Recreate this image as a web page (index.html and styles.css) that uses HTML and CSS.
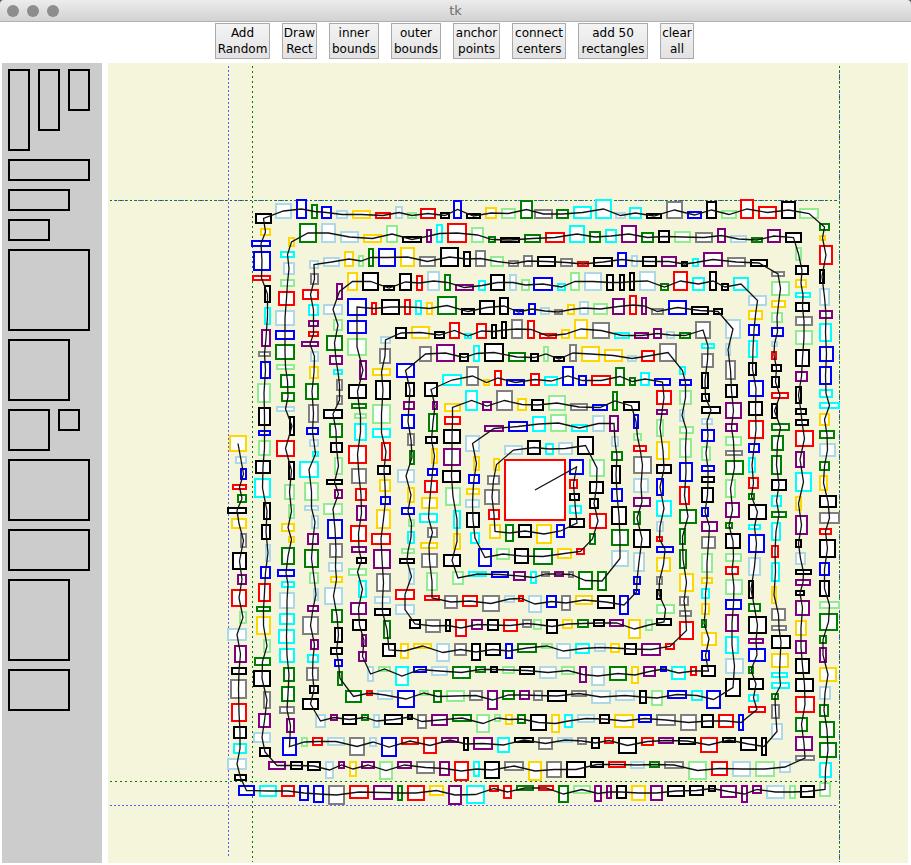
FILE: index.html
```html
<!DOCTYPE html>
<html lang="en">
<head>
    <meta charset="UTF-8">
    <title>tk</title>
    <link rel="stylesheet" href="styles.css">
</head>
<body>
    <div class="titlewrap">
        <div class="titlebar">
            <span class="light"></span>
            <span class="light"></span>
            <span class="light"></span>
            <span class="title">tk</span>
        </div>
    </div>
    <div class="toolbar">
        <button class="w55">Add<br>Random</button>
        <button class="w35">Draw<br>Rect</button>
        <button class="w50">inner<br>bounds</button>
        <button class="w50">outer<br>bounds</button>
        <button class="w47">anchor<br>points</button>
        <button class="w54">connect<br>centers</button>
        <button class="w70">add 50<br>rectangles</button>
        <button class="w34">clear<br>all</button>
    </div>
    <div class="main">
        <svg class="palette" viewBox="2 63 100 800">
            <rect x="9" y="70" width="20" height="80"></rect>
            <rect x="39" y="70" width="20" height="60"></rect>
            <rect x="69" y="70" width="20" height="40"></rect>
            <rect x="9" y="160" width="80" height="20"></rect>
            <rect x="9" y="190" width="60" height="20"></rect>
            <rect x="9" y="220" width="40" height="20"></rect>
            <rect x="9" y="250" width="80" height="80"></rect>
            <rect x="9" y="340" width="60" height="60"></rect>
            <rect x="9" y="410" width="40" height="40"></rect>
            <rect x="59" y="410" width="20" height="20"></rect>
            <rect x="9" y="460" width="80" height="60"></rect>
            <rect x="9" y="530" width="80" height="40"></rect>
            <rect x="9" y="580" width="60" height="80"></rect>
            <rect x="9" y="670" width="60" height="40"></rect>
        </svg>
        <svg class="canvas" id="canvas" viewBox="108 63 800 800">
            <path class="guide-blue" d="M228.5 66V857M839.5 66V862M110 200.5H838M110 805.5H838"></path>
            <path class="guide-green" d="M252.5 66V862M839.5 66V862M110 200.5H838M110 781.5H838"></path>
        </svg>
    </div>
    <script src="rects.js"></script>
</body>
</html>
```
FILE: styles.css
```css
html, body {
    margin: 0;
    height: 100%;
    background: white;
    overflow: hidden;
}
body {
    font-family: "DejaVu Sans", sans-serif;
}
.titlewrap {
    background: #5a5a5a;
}
.titlebar {
    position: relative;
    display: flex;
    align-items: center;
    gap: 8px;
    height: 21px;
    padding-left: 7px;
    background: linear-gradient(#ececec, #d2d2d2);
    border-bottom: 1px solid #b1b1b1;
    border-radius: 4px 4px 0 0;
}
.light {
    width: 12px;
    height: 12px;
    border-radius: 50%;
    background: #8e8c8f;
}
.title {
    position: absolute;
    left: 0;
    right: 0;
    text-align: center;
    font-size: 13px;
    color: #6e6e6e;
}
.toolbar {
    display: flex;
    justify-content: center;
    gap: 12px;
    height: 36px;
    margin-top: 1px;
    padding-right: 2px;
}
button {
    box-sizing: border-box;
    height: 36px;
    padding: 0;
    font-family: "DejaVu Sans", sans-serif;
    font-size: 12px;
    line-height: 16px;
    color: black;
    background: linear-gradient(#f4f4f4, #e2e2e2);
    border: 1px solid #aaaaaa;
    border-radius: 0;
}
.w34 { width: 34px; }
.w35 { width: 35px; }
.w47 { width: 47px; }
.w50 { width: 50px; }
.w54 { width: 54px; }
.w55 { width: 55px; }
.w70 { width: 70px; }
.main {
    display: flex;
    gap: 6px;
    margin-top: 4px;
    padding-left: 2px;
}
.palette {
    display: block;
    width: 100px;
    height: 800px;
    background: #cccccc;
}
.palette rect {
    fill: none;
    stroke: black;
    stroke-width: 2;
}
.canvas {
    display: block;
    width: 800px;
    height: 800px;
    background: #f5f5dc;
}
.guide-blue, .guide-green {
    fill: none;
    stroke-width: 1;
}
.guide-blue {
    stroke: #5c5cf5;
    stroke-dasharray: 2 2;
}
.guide-green {
    stroke: #008000;
    stroke-dasharray: 2 3;
}
.shape {
    fill: white;
    stroke-width: 2;
}
.link {
    fill: none;
    stroke: #111111;
    stroke-width: 1.3;
}
```
FILE: rects.js
```js
// Rectangles in path order, from the outer end of the spiral to the centre.
// Each run is measured in a 3x view of one area, so it keeps that area's origin.
const origins = {
    A: [220, 190], B: [530, 190],
    E: [220, 410], F: [530, 410],
    G: [220, 630], H: [530, 630]
};
const k = "#000000", r = "#ff0000", b = "#0000ff", g = "#008000", l = "#90ee90",
      c = "#00ffff", a = "#add8e6", y = "#ffd700", p = "#800080", m = "#808080";

const shapes = [];

function add(area, list) {
    const [ox, oy] = origins[area];
    list.forEach(([x1, y1, x2, y2, color]) => {
        shapes.push({
            x: Math.round(ox + x1 / 3 + 1),
            y: Math.round(oy + y1 / 3 + 1),
            w: Math.round((x2 - x1) / 3 - 2),
            h: Math.round((y2 - y1) / 3 - 2),
            color: color
        });
    });
}

function rev(area, list) {
    add(area, list.slice().reverse());
}

// outermost left column, bottom row, right column, top row
add("E", [[27,76,82,127,y],[46,139,82,163,a],[61,175,82,211,b],[37,223,82,241,r],[52,253,82,280,g],[22,292,82,313,k],[34,325,82,358,y],[61,370,82,415,m],[37,427,82,481,k],[52,493,82,526,p],[34,538,82,591,r],[58,604,82,643,l]]);
add("G", [[22,-5,82,34,a],[43,46,82,100,p],[34,112,82,136,k],[31,148,82,208,m],[34,220,82,277,r],[40,289,82,328,k],[40,340,82,373,c],[22,385,82,421,a],[43,433,82,454,k]]);
add("G", [[55,466,106,499,b],[118,466,172,502,c],[184,466,226,502,r],[238,466,268,514,b],[280,466,313,520,b],[325,466,376,526,m],[388,466,448,508,r],[460,466,521,511,p],[532,466,551,514,g],[562,466,616,514,r],[628,466,673,499,y],[685,466,727,526,p],[739,466,796,523,c],[808,466,838,487,r],[850,466,877,508,r],[889,466,943,484,g]]);
add("H", [[25,466,73,484,r],[85,466,118,520,g],[130,466,184,493,l],[193,466,217,517,p],[229,466,247,508,p],[259,466,292,508,k],[304,466,350,514,y],[361,466,400,514,p],[412,466,466,502,k],[478,466,523,499,k],[535,466,559,487,k],[571,466,622,505,p],[634,466,655,520,p],[667,466,697,493,p],[709,466,766,508,a],[778,466,799,508,l],[811,466,856,505,k]]);
rev("H", [[868,14,893,41,g],[868,52,893,100,p],[868,112,922,157,y],[868,169,905,211,a],[868,223,899,262,g],[868,274,916,325,g],[868,337,922,385,g],[868,397,908,445,c],[868,457,905,502,l]]);
rev("F", [[868,10,902,49,y],[868,61,916,88,g],[868,100,919,142,a],[868,154,902,184,g],[868,196,896,244,y],[868,256,922,295,k],[868,307,930,343,m],[868,355,908,376,r],[868,388,919,445,k],[868,457,902,499,b],[868,511,902,562,k],[868,574,930,598,l],[868,610,925,663,g]]);
rev("B", [[868,100,902,124,g],[868,136,890,154,y],[868,166,911,226,r],[868,238,887,284,k],[868,295,902,349,a],[868,361,911,388,p],[868,400,908,457,c],[868,469,914,517,b],[868,529,908,586,b],[868,598,911,625,c],[868,637,930,659,c]]);
rev("B", [[12,58,68,88,m],[79,58,119,88,g],[130,49,186,88,c],[196,28,246,88,c],[255,67,287,88,a],[298,52,338,88,c],[349,70,397,88,k],[409,34,461,88,m],[472,64,518,88,b],[529,34,563,88,k],[574,61,621,88,l],[631,28,674,88,r],[685,49,743,88,r],[754,34,798,88,k],[808,55,868,88,l]]);
rev("A", [[106,70,156,102,k],[166,40,218,88,a],[229,28,263,88,b],[273,43,293,88,g],[304,49,338,88,b],[349,61,386,88,a],[397,61,455,88,y],[466,67,515,88,r],[526,49,551,88,a],[562,67,591,88,l],[601,55,650,88,r],[661,67,690,88,k],[700,31,728,88,b],[739,70,785,88,k],[796,52,833,88,y],[844,55,890,88,l],[900,31,939,88,g]]);

// second ring
add("A", [[121,115,154,139,y],[94,151,154,172,b],[100,184,154,244,b],[97,256,154,274,r],[133,286,154,340,k],[133,352,154,406,c],[124,418,154,472,p],[115,484,154,502,m],[121,514,154,568,b],[112,580,154,640,l]]);
add("E", [[115,-8,154,49,k],[115,61,154,79,b],[115,91,154,139,l],[106,151,154,193,k],[103,205,154,265,c],[130,277,154,331,k],[124,343,154,391,k],[136,403,154,457,a],[121,469,154,508,b],[115,520,154,577,r],[109,589,154,607,g],[109,619,154,676,y]]);
add("G", [[130,28,154,70,l],[103,82,154,109,g],[100,121,154,172,k],[130,184,154,238,m],[115,250,154,295,p],[100,307,154,340,a],[118,352,154,382,k]]);
add("G", [[145,394,199,421,p],[211,394,250,421,k],[262,394,304,424,k],[316,394,343,448,a],[355,394,376,418,p],[388,394,412,442,y],[424,394,466,418,p],[478,394,520,451,l],[532,394,577,418,p],[589,394,646,433,m],[658,394,691,439,p],[703,394,748,454,r],[760,394,781,442,c],[793,394,841,448,k],[853,394,913,424,m],[925,394,967,454,y]]);
add("H", [[49,394,97,445,m],[109,394,169,445,k],[181,394,223,415,k],[235,394,289,415,r],[301,394,346,418,a],[358,394,391,415,g],[403,394,463,418,m],[475,394,532,451,l],[544,394,595,439,r],[607,394,664,442,a],[676,394,736,442,l],[748,394,784,430,a]]);
add("H", [[796,376,856,394,m],[796,319,850,364,p],[796,262,835,307,g],[796,199,856,250,r],[796,145,853,187,k],[796,85,841,133,k],[796,31,832,73,p]]);
rev("F", [[796,28,838,49,k],[796,61,853,112,r],[796,124,826,175,p],[796,187,847,247,c],[796,259,817,304,y],[796,316,835,376,p],[796,388,817,415,k],[796,427,829,466,a],[796,478,847,496,k],[796,508,844,529,p],[796,541,826,559,k],[796,571,841,619,p],[796,631,832,679,y]]);
rev("B", [[796,172,817,214,l],[796,226,838,256,k],[796,268,832,295,y],[796,307,844,325,c],[796,337,841,367,k],[796,379,850,409,m],[796,421,850,466,l],[796,478,841,532,k],[796,544,835,577,p],[796,589,817,643,k],[796,655,832,676,k]]);
rev("B", [[46,127,106,160,r],[118,106,166,160,c],[178,124,214,160,g],[226,118,262,160,c],[274,106,322,160,p],[334,127,373,160,g],[385,121,421,160,k],[433,124,484,160,l],[496,127,550,160,m],[562,115,589,160,p],[601,136,652,160,a],[664,142,700,160,g],[712,118,754,160,p],[766,127,817,160,k]]);
rev("A", [[238,100,292,160,g],[304,100,349,160,a],[361,124,418,160,a],[430,133,487,160,y],[499,106,535,160,l],[547,139,607,160,k],[619,118,637,160,p],[649,103,670,160,c],[682,100,742,160,r],[754,112,793,160,l],[805,139,829,160,g],[841,142,901,160,k],[913,133,964,160,g]]);

// third ring
add("A", [[205,142,226,172,y],[181,184,226,205,c],[190,217,226,256,a],[181,268,226,292,l],[175,304,226,349,r],[166,361,226,409,a],[166,421,226,451,b],[166,463,226,511,g],[169,523,226,541,l],[181,553,226,595,g],[184,607,226,637,g],[169,649,226,667,a]]);
add("E", [[208,19,226,79,k],[169,91,226,142,r],[205,154,226,211,k],[193,223,226,271,l],[205,283,226,328,l],[184,340,226,367,y],[205,379,226,400,y],[184,412,226,466,g],[172,478,226,502,b],[184,514,226,535,c],[178,547,226,598,a],[178,610,226,646,c]]);
add("G", [[175,-2,226,43,c],[178,55,226,100,c],[190,112,226,157,g],[184,169,226,217,g],[178,229,226,253,m],[199,265,226,310,p]]);
add("G", [[187,322,232,379,b],[244,322,265,352,l],[277,322,310,349,r],[322,322,376,349,a],[388,322,436,379,m],[448,322,472,352,a],[484,322,532,382,b],[544,322,598,346,r],[610,322,652,373,r],[664,322,718,340,p],[730,322,748,364,k],[760,322,820,361,p],[832,322,871,370,c],[883,322,943,340,k]]);
add("H", [[25,322,70,361,m],[82,322,130,340,a],[142,322,172,346,m],[184,322,211,358,k],[223,322,253,343,r],[265,322,322,373,k],[334,322,373,349,r],[385,322,433,343,p],[445,322,499,346,k],[511,322,565,370,r],[577,322,619,340,k],[631,322,682,364,k],[694,322,712,379,k]]);
add("H", [[724,280,760,331,a],[724,223,751,268,m],[724,190,748,211,g],[724,157,781,178,c],[724,127,775,145,c],[724,70,778,115,y],[724,16,784,58,k]]);
rev("F", [[724,40,781,64,g],[724,76,763,124,g],[724,136,757,196,g],[724,208,772,244,k],[724,256,757,292,c],[724,304,772,325,g],[724,337,754,394,c],[724,406,748,445,r],[724,457,751,517,c],[724,529,742,583,y],[724,595,769,634,m],[724,646,772,664,m]]);
rev("B", [[724,244,766,262,m],[724,274,781,319,l],[724,331,769,355,y],[724,367,760,400,l],[724,412,763,442,b],[724,454,745,472,a],[724,484,742,511,r],[724,523,757,547,k],[724,559,751,595,k],[724,607,778,628,r],[724,640,745,688,k]]);
rev("B", [[22,199,79,232,k],[91,205,130,232,m],[142,214,178,232,r],[190,202,250,232,k],[262,187,292,232,b],[304,196,325,232,a],[337,199,382,232,k],[394,199,442,232,p],[454,214,475,232,k],[487,205,508,232,c],[520,187,580,232,p],[592,202,649,232,m],[661,208,715,232,k]]);
rev("A", [[310,202,361,232,a],[373,184,403,232,y],[415,196,433,232,l],[445,175,463,232,g],[475,175,529,232,b],[541,172,586,232,y],[598,199,649,232,m],[661,172,718,232,k],[730,184,754,232,k],[766,181,799,232,m],[811,199,853,232,l],[865,211,898,232,m],[910,196,940,232,m]]);

// fourth ring
add("A", [[268,211,298,238,a],[271,250,298,286,m],[247,298,298,331,r],[265,343,298,379,c],[265,391,298,412,p],[265,424,298,442,r],[244,454,298,472,p],[271,484,298,517,a],[268,529,298,568,y],[256,580,298,631,g]]);
add("E", [[265,-17,298,40,m],[259,52,298,76,b],[268,88,298,112,a],[277,124,298,142,c],[238,154,298,205,c],[253,217,298,274,l],[253,286,298,304,a],[274,316,298,358,a],[262,370,298,406,p],[253,418,298,475,g],[268,487,298,523,l],[280,535,298,574,a],[262,586,298,607,p],[247,619,298,676,m]]);
add("G", [[271,28,298,61,p],[262,73,298,100,c],[259,112,298,154,m],[268,166,298,193,k],[247,205,298,241,k]]);
add("G", [[286,253,319,295,a],[331,253,355,274,p],[367,253,412,286,k],[424,253,448,274,g],[460,253,481,295,a],[493,253,550,286,k],[562,253,580,271,k],[592,253,622,298,m],[634,253,685,289,p],[697,253,757,277,g],[769,253,811,310,l],[823,253,844,277,l],[856,253,880,286,y],[892,253,919,283,g],[931,253,982,304,k]]);
add("H", [[64,253,91,310,y],[103,253,130,295,c],[142,253,196,280,a],[208,253,241,283,k],[253,253,313,295,y],[325,253,367,280,b],[379,253,439,289,m],[451,253,502,304,m],[514,253,553,295,k],[565,253,613,295,r],[625,253,643,304,b]]);
add("H", [[655,229,709,250,r],[655,193,688,217,c],[655,145,703,181,k],[655,109,673,133,g],[655,55,709,97,b],[655,25,703,43,p]]);
rev("F", [[655,31,703,88,r],[655,100,691,130,b],[655,142,679,190,c],[655,202,688,238,r],[655,250,676,271,g],[655,283,712,331,k],[655,343,694,361,c],[655,373,706,430,b],[655,442,694,499,a],[655,511,673,568,k],[655,580,694,607,g],[655,619,712,673,k]]);
rev("B", [[655,316,712,349,a],[655,361,700,391,y],[655,403,691,439,b],[655,451,685,505,c],[655,517,682,559,k],[655,571,703,622,b],[655,634,700,679,k]]);
rev("B", [[10,262,70,304,b],[82,280,109,304,c],[121,247,151,304,l],[163,247,217,304,a],[229,253,253,304,k],[268,253,286,304,k],[298,247,316,304,k],[328,244,379,304,a],[391,280,418,304,g],[430,244,475,304,r],[487,262,526,304,c],[538,244,562,304,k],[574,280,598,304,k],[610,262,658,304,c]]);
rev("A", [[382,247,415,304,y],[427,247,478,304,k],[490,286,526,304,k],[538,250,577,304,k],[589,256,610,304,r],[622,244,661,304,a],[673,253,694,304,g],[706,283,763,304,p],[775,271,799,304,c],[811,253,856,304,k],[868,253,892,304,a],[904,268,932,304,l]]);

// fifth ring
add("A", [[349,280,370,331,p],[310,343,370,376,a],[340,388,370,424,l],[319,436,370,484,g],[328,496,370,526,p],[340,538,370,556,c],[349,568,370,604,m],[349,616,370,646,m]]);
add("E", [[310,-2,370,28,k],[328,40,370,85,g],[331,97,370,130,k],[343,142,370,196,l],[319,208,370,226,k],[343,238,370,268,p],[310,280,370,316,l],[322,328,370,388,b],[328,400,370,445,m],[325,457,370,487,a],[331,499,370,520,y],[313,532,370,586,a],[334,598,370,640,g],[343,652,370,700,k]]);
add("G", [[331,52,370,76,k],[343,88,370,112,b],[352,124,370,169,g]]);
add("G", [[376,181,427,220,g],[439,181,460,199,r],[472,181,520,211,a],[532,181,586,235,b],[598,181,628,199,l],[640,181,667,220,g],[679,181,736,217,l],[748,181,790,214,m],[802,181,835,241,p],[847,181,886,211,g],[898,181,930,211,p]]);
add("H", [[10,181,40,214,m],[52,181,112,217,k],[124,181,172,202,m],[184,181,244,223,a],[256,181,316,214,a],[328,181,352,223,k],[364,181,400,229,l],[412,181,472,208,b],[484,181,520,214,c],[529,181,574,238,b]]);
add("H", [[586,145,634,202,k],[586,85,643,133,a],[586,19,628,73,c]]);
rev("F", [[586,40,625,67,p],[586,79,637,109,l],[586,121,640,139,m],[586,151,643,196,g],[586,208,619,265,l],[586,277,631,325,p],[586,337,610,358,g],[586,370,634,418,k],[586,430,637,457,l],[586,469,628,496,r],[586,508,640,556,l],[586,568,637,601,b],[586,613,628,667,p]]);
rev("B", [[586,388,634,448,a],[586,460,604,499,a],[586,511,619,571,m],[586,583,625,625,k],[586,637,637,688,p]]);
rev("B", [[31,352,61,376,a],[73,358,100,376,m],[112,343,136,376,y],[148,334,178,376,a],[190,340,235,376,l],[247,325,286,376,p],[298,316,322,376,r],[334,322,352,376,p],[364,355,403,376,m],[415,331,472,376,b],[484,349,538,376,k],[550,355,580,376,k]]);
rev("A", [[454,337,472,376,r],[484,328,541,376,k],[553,328,574,376,r],[586,331,607,376,c],[619,337,640,376,y],[652,319,712,376,g],[724,355,766,376,k],[778,331,826,376,k],[838,322,868,376,k],[880,358,913,376,b],[925,340,949,376,b]]);

// sixth ring
add("A", [[382,325,442,379,b],[382,391,442,433,b],[382,445,442,499,l],[418,511,442,571,p],[385,583,442,628,k],[394,640,442,658,g]]);
add("E", [[403,10,442,28,l],[403,40,442,94,c],[385,106,442,163,r],[394,175,442,223,m],[406,235,442,274,r],[409,286,442,334,p],[391,346,442,397,r],[394,409,442,430,p],[409,442,442,463,k],[385,475,442,499,l],[415,511,442,565,c],[391,577,442,616,p],[397,628,442,664,k]]);
add("G", [[424,13,442,52,p],[415,64,442,97,p]]);
add("G", [[442,109,463,157,a],[475,109,514,127,l],[526,109,568,169,c],[580,109,622,130,b],[634,109,685,139,a],[697,109,754,148,g],[766,109,799,130,g],[811,109,835,130,k],[847,109,886,133,l],[898,109,946,136,k]]);
add("H", [[28,109,82,148,a],[94,109,136,136,l],[148,109,172,160,p],[184,109,226,169,a],[238,109,292,154,g],[304,109,328,163,y],[340,109,379,142,p],[391,109,412,127,b],[424,109,469,151,c],[481,109,502,139,r]]);
add("H", [[514,106,559,142,k],[514,61,541,94,b],[514,7,562,49,y]]);
rev("F", [[514,25,550,46,a],[514,58,556,97,b],[514,109,544,154,l],[514,166,556,187,b],[514,199,556,220,k],[514,232,553,280,k],[514,292,538,322,b],[514,334,565,367,p],[514,379,559,418,m],[514,430,550,490,l],[514,502,550,523,y],[514,535,541,568,c],[514,580,541,616,y],[514,628,532,655,g]]);
rev("B", [[514,460,556,478,c],[514,490,553,535,m],[514,547,538,598,k],[514,610,541,637,k],[514,649,574,673,k]]);
rev("B", [[28,430,82,448,r],[94,418,121,448,y],[133,388,175,448,y],[187,397,241,448,m],[253,427,301,448,c],[313,427,358,448,p],[370,415,397,448,p],[409,424,436,448,a],[448,427,484,448,g],[496,394,544,448,m]]);
rev("A", [[526,412,562,448,k],[574,409,631,448,y],[643,424,676,448,k],[688,397,721,448,r],[733,430,757,448,c],[769,400,802,448,r],[814,403,832,448,k],[844,394,862,448,k],[874,388,910,448,m],[922,391,946,448,r]]);

// seventh ring
add("A", [[481,439,514,463,a],[478,475,514,523,m],[457,535,514,559,y],[466,571,514,631,k]]);
add("E", [[457,-17,514,43,l],[457,55,514,85,c],[484,97,514,154,r],[472,166,514,196,k],[478,208,514,247,y],[481,259,514,286,b],[469,298,514,358,y],[454,370,514,406,r],[460,418,514,478,p],[469,490,514,547,m],[463,559,514,583,a],[463,595,514,619,k],[490,631,514,688,g]]);
add("G", [[487,40,529,82,k],[541,40,568,88,y],[580,40,637,58,y],[649,40,691,97,a],[703,40,742,79,m],[754,40,784,94,k],[796,40,844,79,k],[856,40,880,88,b],[892,40,952,70,g]]);
add("H", [[34,40,70,58,l],[79,40,124,88,a],[136,40,181,73,c],[193,40,229,67,a],[241,40,271,70,y],[283,40,322,76,k],[334,40,394,79,p],[406,40,436,61,r]]);
rev("F", [[448,-2,466,37,a],[448,49,493,73,l],[448,85,487,145,l],[448,157,490,217,b],[448,229,481,286,r],[448,298,502,343,g],[448,355,469,406,g],[448,418,472,478,g],[448,490,493,547,y],[448,559,478,589,m],[448,601,487,622,m],[448,634,493,691,r]]);
rev("B", [[448,529,469,556,c],[448,568,487,589,b],[448,601,487,646,l]]);
rev("B", [[0,490,28,517,k],[40,469,58,517,l],[70,499,106,517,k],[118,463,142,517,m],[154,469,211,517,y],[223,478,280,517,y],[292,496,322,517,a],[334,481,376,517,r],[388,460,442,517,m]]);
rev("A", [[598,469,637,517,m],[649,463,706,517,p],[718,490,748,517,k],[760,466,781,517,c],[793,460,853,517,k],[865,487,919,517,g]]);

// eighth ring
add("A", [[529,520,586,565,b],[556,577,586,622,k],[550,634,586,662,p]]);
add("E", [[544,13,586,58,b],[562,70,586,109,m],[568,121,586,166,g],[532,178,586,220,a],[562,232,586,280,y],[544,292,586,316,b],[565,328,586,352,l],[562,364,586,403,c],[544,415,586,433,l],[538,445,586,463,k],[565,475,586,526,a],[526,538,586,571,r],[526,583,586,616,a]]);
add("E", [[568,628,604,657,k],[616,628,664,670,m],[676,628,694,667,k],[706,628,742,682,r],[754,628,790,660,p],[802,628,838,664,k],[850,628,895,667,r],[907,628,937,655,m]]);
add("F", [[10,628,37,660,l],[49,628,85,673,k],[97,628,130,658,y],[142,628,178,655,g],[190,628,226,652,k],[238,628,283,652,p],[295,628,334,688,y],[346,628,370,664,l]]);
add("F", [[379,625,427,649,k],[379,583,436,613,l],[379,538,397,571,k],[379,499,400,526,m],[379,442,424,487,y],[379,409,433,430,b],[379,379,400,397,r],[379,334,403,367,a],[379,271,427,322,c],[379,205,403,259,b],[379,163,427,193,k],[379,94,421,151,y],[379,28,403,82,l]]);
add("B", [[379,658,415,676,p],[379,601,427,646,r]]);
rev("B", [[0,550,31,589,r],[43,559,85,589,c],[97,529,133,589,b],[145,556,172,589,b],[184,556,244,589,r],[256,532,286,589,g],[298,562,319,589,g],[331,547,361,589,c],[373,565,424,589,b]]);
rev("A", [[667,553,727,589,c],[739,529,778,589,m],[790,568,811,589,y],[823,541,847,589,r],[859,568,916,589,b]]);

// ninth ring
add("A", [[613,577,655,622,k],[637,634,655,660,p]]);
add("E", [[625,10,655,67,g],[616,79,655,103,k],[634,115,655,163,y],[622,175,655,199,b],[613,211,655,250,r],[604,262,655,298,y],[598,310,655,340,c],[622,352,655,385,m],[601,397,655,418,y],[604,430,655,475,m],[619,487,655,544,l]]);
add("E", [[613,556,661,574,r],[673,556,715,598,m],[727,556,775,592,r],[787,556,841,607,m],[853,556,886,580,a],[895,556,913,577,r],[925,556,967,610,a]]);
add("F", [[49,556,82,595,b],[94,556,124,604,m],[136,556,190,586,y],[202,556,256,598,k],[268,556,298,616,b]]);
add("F", [[310,538,331,556,b],[310,499,334,526,b],[310,427,346,487,a],[310,358,364,415,k],[310,304,334,346,g],[310,262,364,292,p],[310,205,358,250,a],[310,139,367,193,m],[310,106,352,127,r],[310,70,337,94,l],[310,13,328,58,b]]);
rev("B", [[4,628,43,663,k],[55,616,109,663,l],[121,640,175,663,m],[187,643,235,663,b],[247,604,265,663,g],[278,634,328,663,k]]);
rev("A", [[736,601,775,663,c],[787,634,817,663,p],[829,601,880,663,m],[892,625,922,663,y]]);

// tenth ring
add("A", [[673,640,724,667,y]]);
add("E", [[673,19,724,46,r],[670,58,724,103,k],[670,115,724,169,p],[667,181,724,220,k],[676,232,724,289,l],[700,301,724,358,c],[700,370,724,421,y],[670,433,724,472,k],[697,484,733,526,l]]);
add("E", [[745,484,802,502,c],[814,484,868,505,b],[880,484,919,514,p]]);
add("F", [[0,484,22,523,c],[34,484,61,502,m],[73,484,103,502,p],[115,484,133,505,m],[145,484,190,541,g],[202,484,232,544,g]]);
add("F", [[244,421,298,472,a],[244,358,298,409,g],[244,289,292,346,k],[244,235,280,277,b],[244,166,274,223,k],[244,124,280,154,g],[244,79,268,112,a],[238,16,268,67,p]]);
add("F", [[187,16,226,67,a],[124,43,175,67,c],[61,13,112,67,l],[7,19,49,67,c]]);
add("E", [[865,34,925,67,b],[793,46,853,67,p]]);

// innermost ring, ending in the big red rectangle
add("E", [[736,76,781,127,a],[760,139,781,184,y],[745,193,781,223,b],[739,235,781,256,y],[736,268,781,295,a],[739,307,781,355,k],[751,367,781,403,c],[775,415,817,472,b],[829,415,871,451,l],[883,415,928,463,k]]);
add("F", [[10,415,70,466,g],[82,415,127,448,y],[139,415,166,436,r],[178,370,199,406,g],[178,310,232,358,r],[178,265,208,298,k],[178,214,223,253,k],[178,148,226,202,l],[142,79,193,136,k],[85,97,130,136,a],[46,100,73,136,c],[-8,91,34,136,k]]);
add("E", [[853,106,910,136,a],[820,145,841,184,y],[802,196,841,226,m],[793,238,841,286,m],[805,298,841,331,r],[808,343,844,388,y],[856,343,883,397,g],[895,343,937,385,k]]);
add("F", [[19,343,67,403,y],[79,343,106,385,b],[118,325,166,355,k],[118,286,157,313,c],[118,250,151,274,k],[118,208,145,238,r],[118,148,163,196,b]]);
add("E", [[853,148,1039,334,r]]);

// draw them, centre first, and run a line through the centres
const canvas = document.getElementById("canvas");
const svgNS = "http://www.w3.org/2000/svg";

shapes.slice().reverse().forEach(s => {
    const rect = document.createElementNS(svgNS, "rect");
    rect.setAttribute("class", "shape");
    rect.setAttribute("x", s.x);
    rect.setAttribute("y", s.y);
    rect.setAttribute("width", s.w);
    rect.setAttribute("height", s.h);
    rect.setAttribute("stroke", s.color);
    canvas.appendChild(rect);
});

const pts = shapes.map(s => (s.x + s.w / 2) + " " + (s.y + s.h / 2));
const link = document.createElementNS(svgNS, "path");
link.setAttribute("class", "link");
link.setAttribute("d", "M" + pts.join(" L"));
canvas.appendChild(link);
```
